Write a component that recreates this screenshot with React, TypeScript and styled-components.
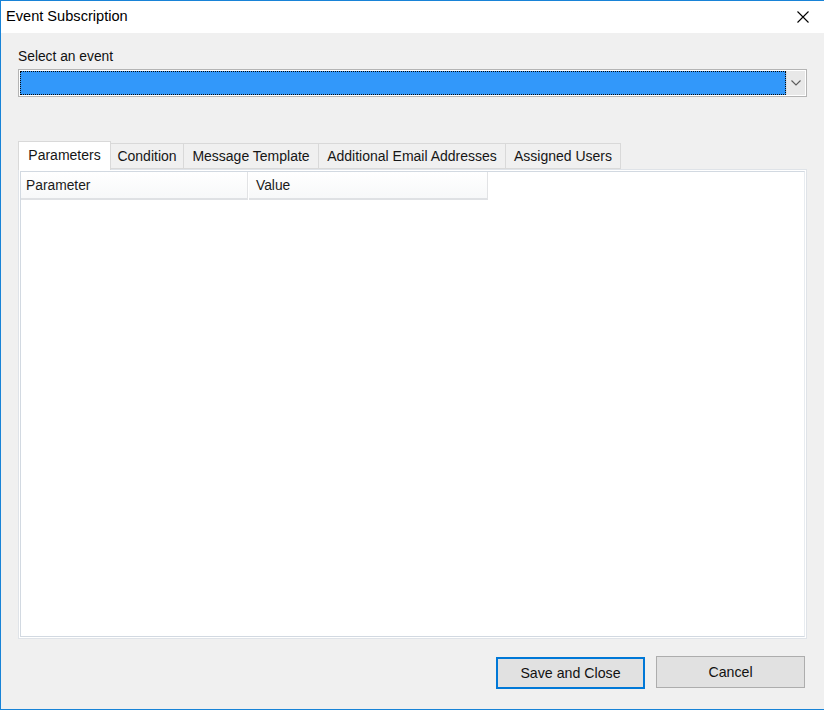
import React from 'react'
import styled, { createGlobalStyle } from 'styled-components'

const GlobalStyle = createGlobalStyle`
  html, body {
    margin: 0;
    padding: 0;
    background: #f0f0f0;
  }
  * {
    box-sizing: border-box;
  }
`

const Window = styled.div`
  width: 824px;
  height: 710px;
  display: flex;
  flex-direction: column;
  border-left: 1px solid #1883d7;
  border-top: 1px solid #1883d7;
  border-bottom: 1px solid #1883d7;
  font-family: 'Liberation Sans', Arial, sans-serif;
  color: #000000;
  overflow: hidden;
`

const TitleBar = styled.div`
  height: 32px;
  flex-shrink: 0;
  background: #ffffff;
  display: flex;
  align-items: center;
  justify-content: space-between;
  padding-left: 5px;
`

const TitleText = styled.div`
  font-size: 14.6px;
  margin-top: -2px;
`

const CloseButton = styled.div`
  width: 46px;
  height: 32px;
  display: flex;
  align-items: center;
  justify-content: center;
  margin-right: -2px;
`

const Body = styled.div`
  flex: 1;
  background: #f0f0f0;
  display: flex;
  flex-direction: column;
  padding: 16px 17px 0 17px;
`

const Label = styled.div`
  font-size: 13.8px;
  color: #111111;
  height: 16px;
  line-height: 16px;
`

const Combo = styled.div`
  margin-top: 4px;
  height: 28px;
  width: 789px;
  border: 1px solid #b4b4b4;
  background: #ffffff;
  display: flex;
  padding: 1px;
`

const ComboValue = styled.div`
  flex: 1;
  background: #3298fa;
  border: 1px dotted #0a0a0a;
`

const ComboArrow = styled.div`
  width: 19px;
  background: #e8e8e8;
  border-left: 1px solid #dcdcdc;
  display: flex;
  align-items: center;
  justify-content: center;
`

const TabStrip = styled.div`
  margin-top: 44px;
  display: flex;
  align-items: flex-end;
  height: 28px;
  position: relative;
  z-index: 1;
`

const Tab = styled.div<{ $active?: boolean; $width: number }>`
  width: ${p => p.$width}px;
  height: ${p => (p.$active ? '29px' : '26px')};
  margin-bottom: ${p => (p.$active ? '-1px' : '0')};
  margin-left: -1px;
  background: ${p => (p.$active ? '#ffffff' : '#f0f0f0')};
  border: 1px solid #d9d9d9;
  border-bottom: ${p => (p.$active ? 'none' : '1px solid #d9d9d9')};
  display: flex;
  align-items: center;
  justify-content: center;
  font-size: 14px;
  color: #161616;
  white-space: nowrap;
  padding-bottom: ${p => (p.$active ? '2px' : '0')};

  &:first-child {
    margin-left: 0;
  }
`

const Panel = styled.div`
  height: 470px;
  width: 789px;
  background: #ffffff;
  border: 1px solid #dfe3e8;
  padding: 1px;
  display: flex;
`

const ListView = styled.div`
  flex: 1;
  border: 1px solid #d2d9e1;
  border-right-color: #e8ecf0;
  background: #ffffff;
  display: flex;
  flex-direction: column;
  align-items: flex-start;
`

const HeaderRow = styled.div`
  display: flex;
  height: 28px;
`

const HeaderCell = styled.div<{ $width: number; $indent: number }>`
  width: ${p => p.$width}px;
  height: 28px;
  padding-left: ${p => p.$indent}px;
  display: flex;
  align-items: center;
  font-size: 13.8px;
  color: #1a1a1a;
  background: linear-gradient(#ffffff, #f7f8f9);
  border-right: 1px solid #e2e3e5;
  border-bottom: 2px solid #dfe1e4;
  margin-right: 1px;
`

const ButtonRow = styled.div`
  display: flex;
  justify-content: flex-end;
  align-items: flex-start;
  gap: 11px;
  margin-top: 17px;
  padding-right: 2px;
`

const Button = styled.div<{ $default?: boolean }>`
  width: 149px;
  height: 32px;
  display: flex;
  align-items: center;
  justify-content: center;
  font-size: 14.2px;
  color: #111111;
  background: #e1e1e1;
  border: ${p => (p.$default ? '2px solid #0078d7' : '1px solid #adadad')};
  margin-top: ${p => (p.$default ? '1px' : '0')};
`

const tabs = [
  { label: 'Parameters', width: 93 },
  { label: 'Condition', width: 74 },
  { label: 'Message Template', width: 136 },
  { label: 'Additional Email Addresses', width: 188 },
  { label: 'Assigned Users', width: 116 },
]

export default function App() {
  return (
    <>
      <GlobalStyle />
      <Window>
        <TitleBar>
          <TitleText>Event Subscription</TitleText>
          <CloseButton>
            <svg width="12" height="12" viewBox="0 0 12 12">
              <path d="M0.5 0.5 L11.5 11.5 M11.5 0.5 L0.5 11.5" stroke="#000" strokeWidth="1.1" />
            </svg>
          </CloseButton>
        </TitleBar>
        <Body>
          <Label>Select an event</Label>
          <Combo>
            <ComboValue />
            <ComboArrow>
              <svg width="10" height="6" viewBox="0 0 10 6">
                <path d="M0.5 0.5 L5 5 L9.5 0.5" fill="none" stroke="#5a5a5a" strokeWidth="1.1" />
              </svg>
            </ComboArrow>
          </Combo>
          <TabStrip>
            {tabs.map((t, i) => (
              <Tab key={t.label} $active={i === 0} $width={t.width}>
                {t.label}
              </Tab>
            ))}
          </TabStrip>
          <Panel>
            <ListView>
              <HeaderRow>
                <HeaderCell $width={227} $indent={5}>Parameter</HeaderCell>
                <HeaderCell $width={239} $indent={7}>Value</HeaderCell>
              </HeaderRow>
            </ListView>
          </Panel>
          <ButtonRow>
            <Button $default>Save and Close</Button>
            <Button>Cancel</Button>
          </ButtonRow>
        </Body>
      </Window>
    </>
  )
}
